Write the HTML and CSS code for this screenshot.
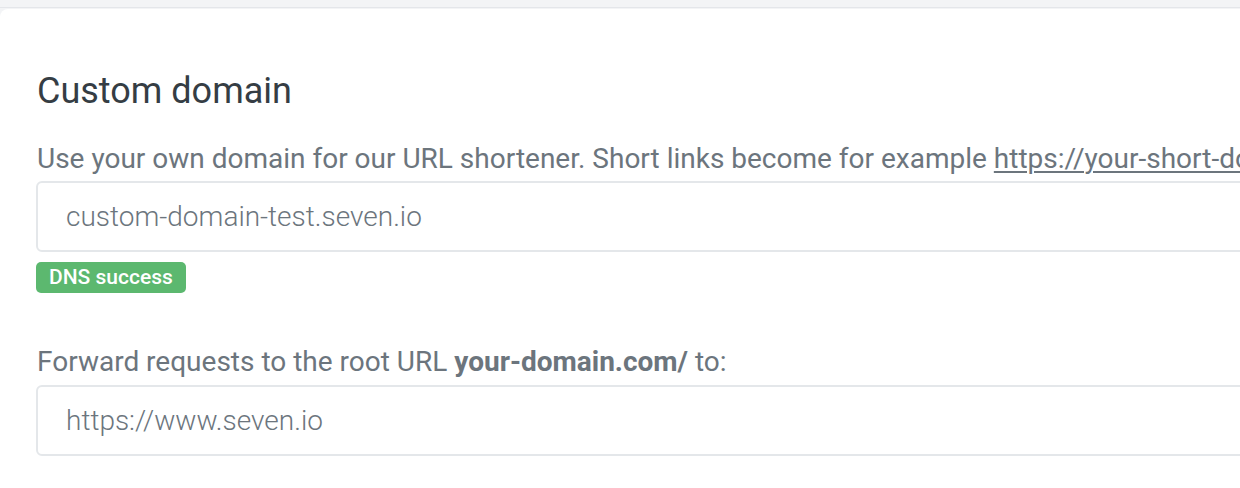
FILE: index.html
```html
<!DOCTYPE html>
<html lang="en">
<head>
<meta charset="utf-8">
<title>Custom domain</title>
<link rel="stylesheet" href="styles.css">
</head>
<body>
<div class="topbar"></div>
<section class="card">
  <h2 class="title">Custom domain</h2>
  <p class="hint">Use your own domain for our URL shortener. Short links become for example <a href="#" class="link">https://your-short-domain.com/abc123</a></p>
  <div class="field">
    <input class="input" type="text" value="custom-domain-test.seven.io">
  </div>
  <span class="badge">DNS success</span>
  <p class="hint label2">Forward requests to the root URL <strong>your-domain.com/</strong> to:</p>
  <div class="field field2">
    <input class="input" type="text" value="https://www.seven.io">
  </div>
</section>
</body>
</html>
```
FILE: styles.css
```css
html, body {
  margin: 0;
  padding: 0;
}
body {
  background: #f3f4f6;
  overflow: hidden;
  font-family: Roboto, "Liberation Sans", sans-serif;
  height: 488px;
}
.topbar {
  height: 7px;
  background: #f3f4f6;
  border-bottom: 1px solid #e4e6ea;
}
.card {
  background: #ffffff;
  width: 1500px;
  margin-top: 1px;
  border-radius: 8px 0 0 0;
  padding: 62px 0 0 37px;
  height: 480px;
  box-sizing: border-box;
}
.title {
  margin: 0;
  font-size: 36px;
  font-weight: 400;
  line-height: 40px;
  color: #353d44;
}
.hint {
  margin: 32px 0 0;
  font-size: 28px;
  line-height: 32px;
  color: #6c757d;
  white-space: nowrap;
}
.link {
  color: #6c757d;
  text-decoration: underline;
  text-decoration-thickness: 2px;
  text-underline-offset: 3px;
}
.hint strong {
  font-weight: 700;
  color: #6c757d;
}
.field {
  margin-top: 6px;
  margin-left: -1px;
}
.field2 {
  margin-top: 7px;
}
.input {
  display: block;
  width: 1400px;
  height: 71px;
  box-sizing: border-box;
  border: 2px solid #e4e7ea;
  border-radius: 6px;
  padding: 0 28px;
  font-family: Roboto, "Liberation Sans", sans-serif;
  font-weight: 300;
  font-size: 28px;
  color: #6c757d;
  background: #fff;
  outline: none;
}
.badge {
  display: block;
  width: fit-content;
  margin-top: 10px;
  margin-left: -1px;
  background: #5cb86f;
  color: #fff;
  font-size: 21px;
  font-weight: 500;
  line-height: 31px;
  padding: 0 13px;
  border-radius: 5px;
}
.label2 {
  margin-top: 53px;
}
```
